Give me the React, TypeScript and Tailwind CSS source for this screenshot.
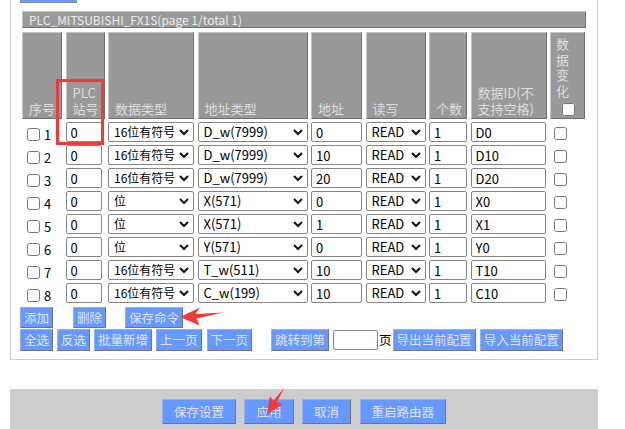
import type { ReactNode } from "react";

type Row = { n: number; type: string; addrType: string; addr: string; id: string };

const rows: Row[] = [
  { n: 1, type: "16位有符号", addrType: "D_w(7999)", addr: "0", id: "D0" },
  { n: 2, type: "16位有符号", addrType: "D_w(7999)", addr: "10", id: "D10" },
  { n: 3, type: "16位有符号", addrType: "D_w(7999)", addr: "20", id: "D20" },
  { n: 4, type: "位", addrType: "X(571)", addr: "0", id: "X0" },
  { n: 5, type: "位", addrType: "X(571)", addr: "1", id: "X1" },
  { n: 6, type: "位", addrType: "Y(571)", addr: "0", id: "Y0" },
  { n: 7, type: "16位有符号", addrType: "T_w(511)", addr: "10", id: "T10" },
  { n: 8, type: "16位有符号", addrType: "C_w(199)", addr: "10", id: "C10" }
];

const typeOptions = ["位", "16位有符号", "16位无符号", "32位有符号", "32位无符号", "浮点数"];
const addrOptions = ["X(571)", "Y(571)", "M(7999)", "S(999)", "T_w(511)", "C_w(199)", "D_w(7999)"];

function Chevron() {
  return (
    <svg width="10" height="7" viewBox="0 0 10 7" className="pointer-events-none absolute right-[5px] top-[7px]">
      <polyline points="1,1 5,5 9,1" fill="none" stroke="#111" strokeWidth="2" />
    </svg>
  );
}

function Select({ value, options, className = "" }: { value: string; options: string[]; className?: string }) {
  return (
    <div className="relative h-[20px]">
      <select
        defaultValue={value}
        className={"h-full w-full appearance-none rounded-[2px] border border-[#858585] bg-white pl-[5px] pr-[16px] leading-[18px] outline-none " + className}
      >
        {options.map((o) => (
          <option key={o} value={o}>
            {o}
          </option>
        ))}
      </select>
      <Chevron />
    </div>
  );
}

function Field({ value, className = "w-full" }: { value: string; className?: string }) {
  return (
    <input
      defaultValue={value}
      className={"h-[20px] rounded-[2px] border border-[#858585] bg-white px-[4px] leading-[18px] outline-none " + className}
    />
  );
}

function HeadCell({ children }: { children: ReactNode }) {
  return (
    <div className="flex h-[87px] flex-col justify-end whitespace-pre border border-t-[#c4c4c4] border-l-[#c4c4c4] border-r-[#6e6e6e] border-b-[#6e6e6e] bg-[#999] pl-[6px] pb-[1px] leading-[16px] text-[#dedede]">
      {children}
    </div>
  );
}

function Btn({ children, className = "" }: { children: ReactNode; className?: string }) {
  return (
    <button className={"border border-t-[#8fb0ff] border-l-[#8fb0ff] border-r-[#747474] border-b-[#747474] bg-[#6699ff] px-[3px] text-[12.5px] text-[#e0e2ee] " + className}>
      {children}
    </button>
  );
}

function BarBtn({ children }: { children: ReactNode }) {
  return (
    <button className="h-[25px] border border-t-[#8fb0ff] border-l-[#8fb0ff] border-r-[#747474] border-b-[#747474] bg-[#6699ff] px-[11px] text-[12.5px] leading-[23px] text-[#e0e2ee]">
      {children}
    </button>
  );
}

export default function App() {
  return (
    <div className="relative h-[429px] w-[625px] overflow-hidden bg-white font-['Noto_Sans_CJK_SC',sans-serif] text-[13px] text-black">
      <div className="ml-[10px] w-[588px] border-x border-b border-[#cccccc] px-[9px] pb-[8px]">
        <div className="h-[3px] w-[57px] border-b border-[#888] bg-[#6699ff]" />
        <div className="mx-[2px] mt-[8px] h-[17px] border border-t-[#c4c4c4] border-l-[#c4c4c4] border-r-[#6e6e6e] border-b-[#6e6e6e] bg-[#999] pl-[6px] text-[12px] leading-[15px] text-[#ececec]">
          PLC_MITSUBISHI_FX1S(page 1/total 1)
        </div>

        <div className="mx-[2px] mt-[4px] grid grid-cols-[40px_39px_86px_110px_51px_60px_38px_76px_35px] gap-x-[3.5px] gap-y-[3px]">
          <HeadCell>序号</HeadCell>
          <HeadCell>{"PLC\n站号"}</HeadCell>
          <HeadCell>数据类型</HeadCell>
          <HeadCell>地址类型</HeadCell>
          <HeadCell>地址</HeadCell>
          <HeadCell>读写</HeadCell>
          <HeadCell>个数</HeadCell>
          <HeadCell>{"数据ID(不\n支持空格)"}</HeadCell>
          <div className="flex h-[87px] flex-col border border-t-[#c4c4c4] border-l-[#c4c4c4] border-r-[#6e6e6e] border-b-[#6e6e6e] bg-[#999] pl-[5px] pt-[3px] text-[#dedede]">
            <div className="w-[14px] break-all leading-[15.5px]">数据变化</div>
            <input type="checkbox" className="m-0 ml-[6px] mt-[5px] h-[13px] w-[13px]" />
          </div>

          {rows.map((r) => (
            <div key={r.n} className="contents">
              <div className="flex h-[20px] items-end gap-[4px] pb-[1px] pl-[5px]">
                <input type="checkbox" className="m-0 h-[13px] w-[13px]" />
                <span className="leading-[13px]">{r.n}</span>
              </div>
              <Field value="0" className="w-[36px]" />
              <Select value={r.type} options={typeOptions} className="text-[12px]" />
              <Select value={r.addrType} options={addrOptions} />
              <Field value={r.addr} />
              <Select value="READ" options={["READ", "WRITE"]} />
              <Field value="1" />
              <Field value={r.id} className="w-[75px]" />
              <div className="flex h-[20px] items-end pb-[2px] pl-[4px]">
                <input type="checkbox" className="m-0 h-[13px] w-[13px]" />
              </div>
            </div>
          ))}
        </div>

        <div className="mt-[4px] flex">
          <Btn className="h-[21px] leading-[19px]">添加</Btn>
          <Btn className="ml-[20px] h-[21px] leading-[19px]">删除</Btn>
          <Btn className="ml-[19px] h-[21px] leading-[19px]">保存命令</Btn>
        </div>
        <div className="mt-[1px] flex items-center">
          <Btn className="h-[22px] leading-[20px]">全选</Btn>
          <Btn className="ml-[4px] h-[22px] leading-[20px]">反选</Btn>
          <Btn className="ml-[4px] h-[22px] leading-[20px]">批量新增</Btn>
          <Btn className="ml-[4px] h-[22px] leading-[20px]">上一页</Btn>
          <Btn className="ml-[5px] h-[22px] leading-[20px]">下一页</Btn>
          <Btn className="ml-[19px] h-[22px] leading-[20px]">跳转到第</Btn>
          <input className="ml-[4px] h-[20px] w-[45px] rounded-[2px] border border-[#858585] bg-white outline-none" />
          <span className="ml-[1px] text-[12.5px]">页</span>
          <Btn className="ml-[1px] h-[22px] leading-[20px]">导出当前配置</Btn>
          <Btn className="ml-[4px] h-[22px] leading-[20px]">导入当前配置</Btn>
        </div>
      </div>

      <div className="ml-[10px] mt-[29px] flex h-[40px] w-[588px] justify-center gap-[8.5px] bg-[#cccccc] pt-[10px]">
        <BarBtn>保存设置</BarBtn>
        <BarBtn>应用</BarBtn>
        <BarBtn>取消</BarBtn>
        <BarBtn>重启路由器</BarBtn>
      </div>

      <div className="pointer-events-none absolute left-[56px] top-[79px] h-[66px] w-[48px] border-[3px] border-[#f23a3a]" />
      <svg className="pointer-events-none absolute left-0 top-0" width="625" height="429" viewBox="0 0 625 429">
        <polygon points="180,317 200,307.5 195.5,314 223.5,312.5 196.5,318.5 199.5,325.5" fill="#f23a3a" />
        <polygon points="267,414.5 282.5,404.5 276.8,402.6 284.3,387.8 273.6,400.6 269.8,396.2" fill="#f23a3a" />
      </svg>
    </div>
  );
}
